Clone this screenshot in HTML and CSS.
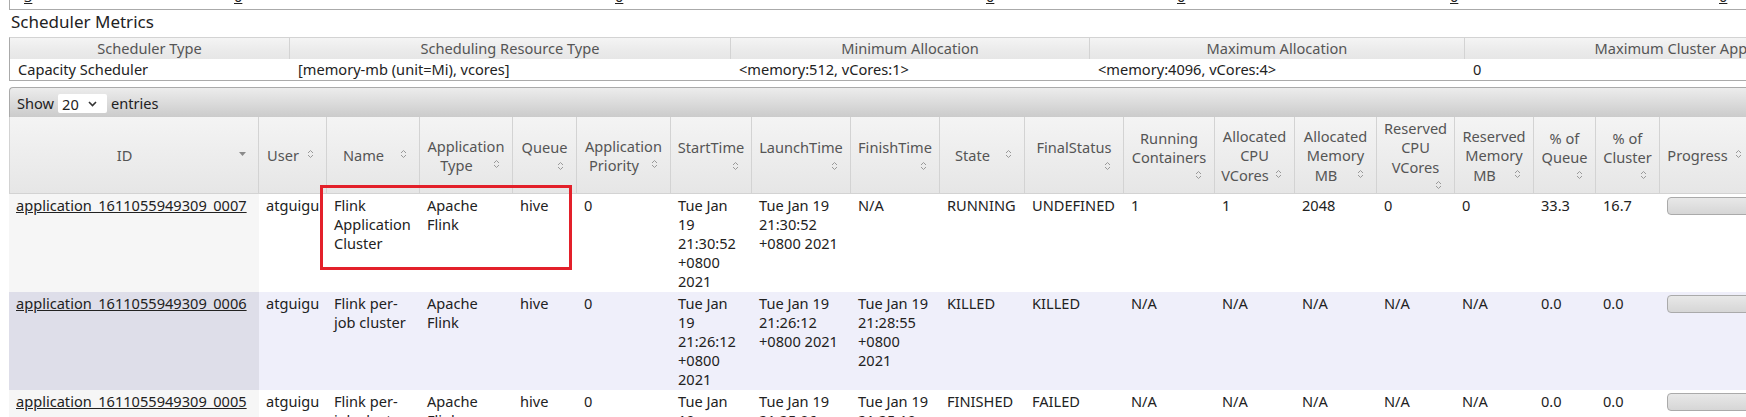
FILE: index.html
```html
<!DOCTYPE html>
<html>
<head>
<meta charset="utf-8">
<title>Scheduler</title>
<link rel="stylesheet" href="styles.css">
</head>
<body>
<div class="page">
  <div class="cluster-strip">
    <div class="cluster-row">
      <a href="#">3</a><a href="#">0</a><a href="#">0</a><a href="#">0</a><a href="#">0</a><a href="#">0</a><a href="#">0</a>
    </div>
  </div>

  <h3 class="title">Scheduler Metrics</h3>

  <table class="metrics">
    <colgroup>
      <col class="m1"><col class="m2"><col class="m3"><col class="m4"><col class="m5">
    </colgroup>
    <thead>
      <tr>
        <th>Scheduler Type</th>
        <th>Scheduling Resource Type</th>
        <th>Minimum Allocation</th>
        <th>Maximum Allocation</th>
        <th>Maximum Cluster Application Priority</th>
      </tr>
    </thead>
    <tbody>
      <tr>
        <td>Capacity Scheduler</td>
        <td>[memory-mb (unit=Mi), vcores]</td>
        <td>&lt;memory:512, vCores:1&gt;</td>
        <td>&lt;memory:4096, vCores:4&gt;</td>
        <td>0</td>
      </tr>
    </tbody>
  </table>

  <div class="toolbar">
    <span>Show</span>
    <span class="select">20
      <svg class="chev" width="9" height="6" viewBox="0 0 9 6"><path d="M1 1 L4.5 4.5 L8 1" fill="none" stroke="#333" stroke-width="1.6"/></svg>
    </span>
    <span>entries</span>
  </div>

  <table class="apps">
    <colgroup>
      <col class="c-id"><col class="c-user"><col class="c-name"><col class="c-type"><col class="c-queue">
      <col class="c-prio"><col class="c-start"><col class="c-launch"><col class="c-finish"><col class="c-state">
      <col class="c-final"><col class="c-run"><col class="c-acpu"><col class="c-amem"><col class="c-rcpu">
      <col class="c-rmem"><col class="c-pq"><col class="c-pc"><col class="c-prog">
    </colgroup>
    <thead>
      <tr>
        <th>ID<span class="si"><svg width="7" height="4" viewBox="0 0 7 4"><polygon points="0,0 7,0 3.5,4" fill="#8a8a8a"/></svg></span></th>
        <th>User<span class="si"><svg width="7" height="10" viewBox="0 0 7 10"><path d="M1 4 L3.5 1.5 L6 4 M1 6 L3.5 8.5 L6 6" fill="none" stroke="#999" stroke-width="1"/></svg></span></th>
        <th>Name<span class="si"><svg width="7" height="10" viewBox="0 0 7 10"><path d="M1 4 L3.5 1.5 L6 4 M1 6 L3.5 8.5 L6 6" fill="none" stroke="#999" stroke-width="1"/></svg></span></th>
        <th>Application Type<span class="si"><svg width="7" height="10" viewBox="0 0 7 10"><path d="M1 4 L3.5 1.5 L6 4 M1 6 L3.5 8.5 L6 6" fill="none" stroke="#999" stroke-width="1"/></svg></span></th>
        <th>Queue<span class="si"><svg width="7" height="10" viewBox="0 0 7 10"><path d="M1 4 L3.5 1.5 L6 4 M1 6 L3.5 8.5 L6 6" fill="none" stroke="#999" stroke-width="1"/></svg></span></th>
        <th>Application Priority<span class="si"><svg width="7" height="10" viewBox="0 0 7 10"><path d="M1 4 L3.5 1.5 L6 4 M1 6 L3.5 8.5 L6 6" fill="none" stroke="#999" stroke-width="1"/></svg></span></th>
        <th>StartTime<span class="si"><svg width="7" height="10" viewBox="0 0 7 10"><path d="M1 4 L3.5 1.5 L6 4 M1 6 L3.5 8.5 L6 6" fill="none" stroke="#999" stroke-width="1"/></svg></span></th>
        <th>LaunchTime<span class="si"><svg width="7" height="10" viewBox="0 0 7 10"><path d="M1 4 L3.5 1.5 L6 4 M1 6 L3.5 8.5 L6 6" fill="none" stroke="#999" stroke-width="1"/></svg></span></th>
        <th>FinishTime<span class="si"><svg width="7" height="10" viewBox="0 0 7 10"><path d="M1 4 L3.5 1.5 L6 4 M1 6 L3.5 8.5 L6 6" fill="none" stroke="#999" stroke-width="1"/></svg></span></th>
        <th>State<span class="si"><svg width="7" height="10" viewBox="0 0 7 10"><path d="M1 4 L3.5 1.5 L6 4 M1 6 L3.5 8.5 L6 6" fill="none" stroke="#999" stroke-width="1"/></svg></span></th>
        <th>FinalStatus<span class="si"><svg width="7" height="10" viewBox="0 0 7 10"><path d="M1 4 L3.5 1.5 L6 4 M1 6 L3.5 8.5 L6 6" fill="none" stroke="#999" stroke-width="1"/></svg></span></th>
        <th>Running Containers<span class="si"><svg width="7" height="10" viewBox="0 0 7 10"><path d="M1 4 L3.5 1.5 L6 4 M1 6 L3.5 8.5 L6 6" fill="none" stroke="#999" stroke-width="1"/></svg></span></th>
        <th>Allocated CPU VCores<span class="si"><svg width="7" height="10" viewBox="0 0 7 10"><path d="M1 4 L3.5 1.5 L6 4 M1 6 L3.5 8.5 L6 6" fill="none" stroke="#999" stroke-width="1"/></svg></span></th>
        <th>Allocated Memory MB<span class="si"><svg width="7" height="10" viewBox="0 0 7 10"><path d="M1 4 L3.5 1.5 L6 4 M1 6 L3.5 8.5 L6 6" fill="none" stroke="#999" stroke-width="1"/></svg></span></th>
        <th>Reserved CPU VCores<span class="si"><svg width="7" height="10" viewBox="0 0 7 10"><path d="M1 4 L3.5 1.5 L6 4 M1 6 L3.5 8.5 L6 6" fill="none" stroke="#999" stroke-width="1"/></svg></span></th>
        <th>Reserved Memory MB<span class="si"><svg width="7" height="10" viewBox="0 0 7 10"><path d="M1 4 L3.5 1.5 L6 4 M1 6 L3.5 8.5 L6 6" fill="none" stroke="#999" stroke-width="1"/></svg></span></th>
        <th>% of Queue<span class="si"><svg width="7" height="10" viewBox="0 0 7 10"><path d="M1 4 L3.5 1.5 L6 4 M1 6 L3.5 8.5 L6 6" fill="none" stroke="#999" stroke-width="1"/></svg></span></th>
        <th>% of Cluster<span class="si"><svg width="7" height="10" viewBox="0 0 7 10"><path d="M1 4 L3.5 1.5 L6 4 M1 6 L3.5 8.5 L6 6" fill="none" stroke="#999" stroke-width="1"/></svg></span></th>
        <th>Progress<span class="si"><svg width="7" height="10" viewBox="0 0 7 10"><path d="M1 4 L3.5 1.5 L6 4 M1 6 L3.5 8.5 L6 6" fill="none" stroke="#999" stroke-width="1"/></svg></span></th>
      </tr>
    </thead>
    <tbody>
      <tr class="even">
        <td class="sorted"><a href="#">application_1611055949309_0007</a></td>
        <td>atguigu</td>
        <td>Flink Application Cluster</td>
        <td>Apache Flink</td>
        <td>hive</td>
        <td>0</td>
        <td>Tue Jan 19 21:30:52 +0800 2021</td>
        <td>Tue Jan 19 21:30:52 +0800 2021</td>
        <td>N/A</td>
        <td>RUNNING</td>
        <td>UNDEFINED</td>
        <td>1</td>
        <td>1</td>
        <td>2048</td>
        <td>0</td>
        <td>0</td>
        <td>33.3</td>
        <td>16.7</td>
        <td><div class="bar"></div></td>
      </tr>
      <tr class="odd">
        <td class="sorted"><a href="#">application_1611055949309_0006</a></td>
        <td>atguigu</td>
        <td>Flink per-job cluster</td>
        <td>Apache Flink</td>
        <td>hive</td>
        <td>0</td>
        <td>Tue Jan 19 21:26:12 +0800 2021</td>
        <td>Tue Jan 19 21:26:12 +0800 2021</td>
        <td>Tue Jan 19 21:28:55 +0800 2021</td>
        <td>KILLED</td>
        <td>KILLED</td>
        <td>N/A</td>
        <td>N/A</td>
        <td>N/A</td>
        <td>N/A</td>
        <td>N/A</td>
        <td>0.0</td>
        <td>0.0</td>
        <td><div class="bar"></div></td>
      </tr>
      <tr class="even">
        <td class="sorted"><a href="#">application_1611055949309_0005</a></td>
        <td>atguigu</td>
        <td>Flink per-job cluster</td>
        <td>Apache Flink</td>
        <td>hive</td>
        <td>0</td>
        <td>Tue Jan 19 21:25:06 +0800 2021</td>
        <td>Tue Jan 19 21:25:06 +0800 2021</td>
        <td>Tue Jan 19 21:25:19 +0800 2021</td>
        <td>FINISHED</td>
        <td>FAILED</td>
        <td>N/A</td>
        <td>N/A</td>
        <td>N/A</td>
        <td>N/A</td>
        <td>N/A</td>
        <td>0.0</td>
        <td>0.0</td>
        <td><div class="bar"></div></td>
      </tr>
    </tbody>
  </table>

  <div class="annot"></div>
</div>
</body>
</html>
```

FILE: styles.css
```css
html {
  overflow: hidden;
  background: #fff;
}
body {
  margin: 0;
  padding: 0;
  width: 1746px;
  height: 417px;
  overflow: hidden;
  font-family: "Noto Sans", "Open Sans", sans-serif;
  font-size: 14.6px;
  color: #222;
}
.page {
  position: relative;
  width: 2100px;
  padding-left: 9px;
}
a {
  color: #222;
  text-decoration: underline;
}

/* cut-off cluster metrics strip */
.cluster-strip {
  height: 9px;
  overflow: hidden;
  border-left: 1px solid #aaa;
  border-bottom: 1px solid #aaa;
}
.cluster-row {
  display: grid;
  grid-template-columns: 210px 381px 371px 191px 273px 269px 100px;
  padding-left: 14px;
  margin-top: -13px;
  line-height: 19px;
}

.title {
  margin: 0;
  padding: 1px 0 4px 2px;
  font-size: 17px;
  font-weight: normal;
  line-height: 22px;
  color: #222;
}

/* scheduler metrics table */
.metrics {
  border-collapse: separate;
  border-spacing: 0;
  table-layout: fixed;
  width: 1972px;
}
.metrics .m1 { width: 281px; }
.metrics .m2 { width: 441px; }
.metrics .m3 { width: 359px; }
.metrics .m4 { width: 375px; }
.metrics .m5 { width: 516px; }
.metrics th {
  font-weight: normal;
  color: #555;
  line-height: 19px;
  padding: 1px 8px;
  background: linear-gradient(to bottom, #f4f4f4 0%, #ececec 50%, #e6e6e6 100%);
  border-top: 1px solid #d3d3d3;
  border-right: 1px solid #d3d3d3;
  text-align: center;
  white-space: nowrap;
}
.metrics td {
  line-height: 19px;
  padding: 1px 8px;
  border-bottom: 1px solid #aaa;
  text-align: left;
  white-space: nowrap;
}
.metrics th:first-child,
.metrics td:first-child {
  border-left: 1px solid #aaa;
}

/* datatables toolbar */
.toolbar {
  margin-top: 6px;
  height: 29px;
  display: flex;
  align-items: center;
  gap: 4px;
  padding-left: 7px;
  border-top: 1px solid #aaa;
  border-left: 1px solid #aaa;
  border-radius: 4px 0 0 0;
  background: linear-gradient(to bottom, #ececec 0%, #dadada 55%, #cbcbcb 100%);
  color: #222;
}
.select {
  display: inline-flex;
  align-items: center;
  justify-content: space-between;
  box-sizing: border-box;
  width: 49px;
  height: 19px;
  padding: 0 10px 0 4px;
  background: #fff;
  border-radius: 2px;
  margin-top: 2px;
}

/* applications table */
.apps {
  border-collapse: separate;
  border-spacing: 0;
  table-layout: fixed;
  width: 1746px;
}
.c-id { width: 250px; }
.c-user { width: 68px; }
.c-name { width: 93px; }
.c-type { width: 93px; }
.c-queue { width: 64px; }
.c-prio { width: 94px; }
.c-start { width: 81px; }
.c-launch { width: 99px; }
.c-finish { width: 89px; }
.c-state { width: 85px; }
.c-final { width: 99px; }
.c-run { width: 91px; }
.c-acpu { width: 80px; }
.c-amem { width: 82px; }
.c-rcpu { width: 78px; }
.c-rmem { width: 79px; }
.c-pq { width: 62px; }
.c-pc { width: 64px; }
.c-prog { width: 95px; }

.apps th {
  font-weight: normal;
  color: #555;
  line-height: 19.3px;
  padding: 2px 6px 0;
  text-align: center;
  vertical-align: middle;
  background: linear-gradient(to bottom, #f4f4f4 0%, #ededed 50%, #e6e6e6 100%);
  border-right: 1px solid #d3d3d3;
  border-bottom: 1px solid #d3d3d3;
}
.apps th:first-child {
  border-left: 1px solid #d3d3d3;
}
.si {
  float: right;
  width: 19px;
  height: 16px;
  display: flex;
  align-items: center;
  justify-content: center;
}
.apps td {
  line-height: 19px;
  padding: 2px 7px 1px;
  text-align: left;
  vertical-align: top;
  color: #222;
}
.apps tr.even td { background: #fff; }
.apps tr.even td.sorted { background: #f6f6f6; }
.apps tr.odd td { background: #efeffa; }
.apps tr.odd td.sorted { background: #dedee9; }

.bar {
  box-sizing: border-box;
  height: 18px;
  margin-top: 1px;
  margin-right: -20px;
  border: 1px solid #aaa;
  border-radius: 4px;
  background: linear-gradient(to bottom, #e8e8e8 0%, #d6d6d6 100%);
}

/* red annotation rectangle drawn over the screenshot */
.annot {
  position: absolute;
  left: 320px;
  top: 185px;
  width: 252px;
  height: 85px;
  box-sizing: border-box;
  border: 3px solid #e3202a;
}
```
